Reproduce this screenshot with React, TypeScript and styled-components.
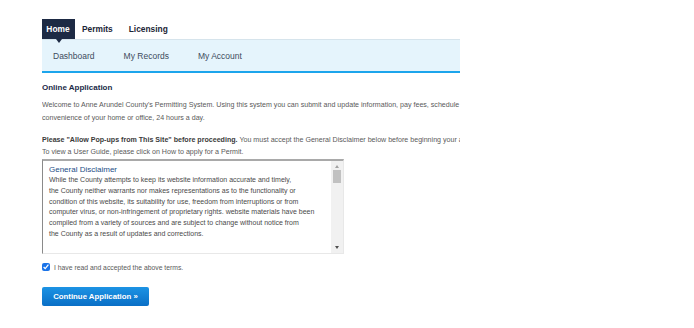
import React from "react";
import styled, { createGlobalStyle } from "styled-components";

const Global = createGlobalStyle`
  html, body { margin: 0; padding: 0; background: #fff; }
  body { font-family: "Liberation Sans", Arial, sans-serif; }
`;

const Page = styled.div`
  padding: 19px 0 0 42px;
`;

const Frame = styled.div`
  width: 418px;
  overflow: hidden;
`;

const Tabs = styled.div`
  display: flex;
  height: 20px;
`;

const Tab = styled.div<{ $active?: boolean }>`
  position: relative;
  display: flex;
  align-items: center;
  justify-content: ${(p) => (p.$active ? "center" : "flex-start")};
  width: ${(p) => (p.$active ? "24px" : "auto")};
  padding: 0 5px 0 ${(p) => (p.$active ? "4px" : "7px")};
  margin-right: ${(p) => (p.$active ? "0" : "4px")};
  font-size: 8.4px;
  font-weight: bold;
  color: ${(p) => (p.$active ? "#fff" : "#1c2636")};
  background: ${(p) => (p.$active ? "#1d2a44" : "transparent")};
`;

const Caret = styled.span`
  position: absolute;
  left: 50%;
  bottom: -4px;
  margin-left: -3px;
  width: 0;
  height: 0;
  border-left: 3px solid transparent;
  border-right: 3px solid transparent;
  border-top: 4px solid #1d2a44;
  z-index: 2;
`;

const SubNav = styled.div`
  display: flex;
  align-items: center;
  gap: 29px;
  height: 31px;
  padding-left: 11px;
  background: #e5f4fc;
  border-top: 1px solid #d6e4ec;
  border-bottom: 2px solid #1ca5ec;
`;

const SubItem = styled.span`
  font-size: 8.5px;
  color: #3d4b5c;
`;

const Heading = styled.div`
  margin-top: 10px;
  font-size: 8px;
  font-weight: bold;
  color: #1b2a48;
`;

const Para = styled.div<{ $gap?: number; $lh?: number }>`
  margin-top: ${(p) => p.$gap ?? 0}px;
  font-size: 7.1px;
  line-height: ${(p) => p.$lh ?? 12}px;
  color: #5a5a5a;
  width: 600px;
`;

const Line = styled.div`
  white-space: nowrap;
`;

const Strong = styled.b`
  color: #3a3a3a;
`;

const Box = styled.div`
  margin-top: 1px;
  display: flex;
  width: 300px;
  height: 92px;
  border-top: 2px solid #a9a9a9;
  border-left: 1px solid #8a8a8a;
  border-right: 1px solid #e8e8e8;
  border-bottom: 1px solid #e8e8e8;
  box-sizing: content-box;
`;

const BoxContent = styled.div`
  flex: 1;
  overflow: hidden;
  padding: 3px 0 0 6px;
`;

const BoxTitle = styled.div`
  font-size: 8px;
  line-height: 11px;
  color: #1c4e86;
`;

const BoxText = styled.div`
  font-size: 7px;
  line-height: 10.8px;
  color: #4a4a4a;
  white-space: nowrap;
`;

const Scrollbar = styled.div`
  width: 12px;
  background: #f1f1f1;
  display: flex;
  flex-direction: column;
  align-items: center;
`;

const Arrow = styled.span<{ $down?: boolean }>`
  width: 0;
  height: 0;
  margin: ${(p) => (p.$down ? "auto 0 4px" : "4px 0 2px")};
  border-left: 2.5px solid transparent;
  border-right: 2.5px solid transparent;
  ${(p) =>
    p.$down
      ? "border-top: 3px solid #505050;"
      : "border-bottom: 3px solid #a3a3a3;"}
`;

const Thumb = styled.div`
  width: 8px;
  height: 13px;
  background: #c1c1c1;
`;

const CheckRow = styled.label`
  display: flex;
  align-items: center;
  gap: 4px;
  margin-top: 9px;
  font-size: 6.8px;
  color: #5a5a5a;
`;

const Check = styled.input`
  width: 8px;
  height: 8px;
  margin: 0;
  accent-color: #1a73e8;
`;

const Button = styled.button`
  display: block;
  margin-top: 16px;
  width: 107px;
  height: 19px;
  border: none;
  border-radius: 2px;
  background: linear-gradient(#1c93e4, #0a6fc6);
  color: #fff;
  font-family: "Liberation Sans", Arial, sans-serif;
  font-size: 7.8px;
  font-weight: bold;
  padding: 0;
  cursor: pointer;
`;

const disclaimer = [
  "While the County attempts to keep its website information accurate and timely,",
  "the County neither warrants nor makes representations as to the functionality or",
  "condition of this website, its suitability for use, freedom from interruptions or from",
  "computer virus, or non-infringement of proprietary rights. website materials have been",
  "compiled from a variety of sources and are subject to change without notice from",
  "the County as a result of updates and corrections.",
];

export default function App() {
  return (
    <>
      <Global />
      <Page>
        <Frame>
          <Tabs>
            <Tab $active>
              Home
              <Caret />
            </Tab>
            <Tab>Permits</Tab>
            <Tab>Licensing</Tab>
          </Tabs>
          <SubNav>
            <SubItem>Dashboard</SubItem>
            <SubItem>My Records</SubItem>
            <SubItem>My Account</SubItem>
          </SubNav>
          <Heading>Online Application</Heading>
          <Para $gap={7} $lh={12.5}>
            <Line>
              Welcome to Anne Arundel County's Permitting System. Using this system you can submit and update information, pay fees, schedule inspections, and check status from the
            </Line>
            <Line>convenience of your home or office, 24 hours a day.</Line>
          </Para>
          <Para $gap={11} $lh={11.5}>
            <Line>
              <Strong>Please "Allow Pop-ups from This Site" before proceeding.</Strong> You must accept the General Disclaimer below before beginning your application.
            </Line>
            <Line>To view a User Guide, please click on How to apply for a Permit.</Line>
          </Para>
          <Box>
            <BoxContent>
              <BoxTitle>General Disclaimer</BoxTitle>
              {disclaimer.map((l) => (
                <BoxText key={l}>{l}</BoxText>
              ))}
            </BoxContent>
            <Scrollbar>
              <Arrow />
              <Thumb />
              <Arrow $down />
            </Scrollbar>
          </Box>
          <CheckRow>
            <Check type="checkbox" defaultChecked />
            I have read and accepted the above terms.
          </CheckRow>
          <Button>Continue Application »</Button>
        </Frame>
      </Page>
    </>
  );
}
